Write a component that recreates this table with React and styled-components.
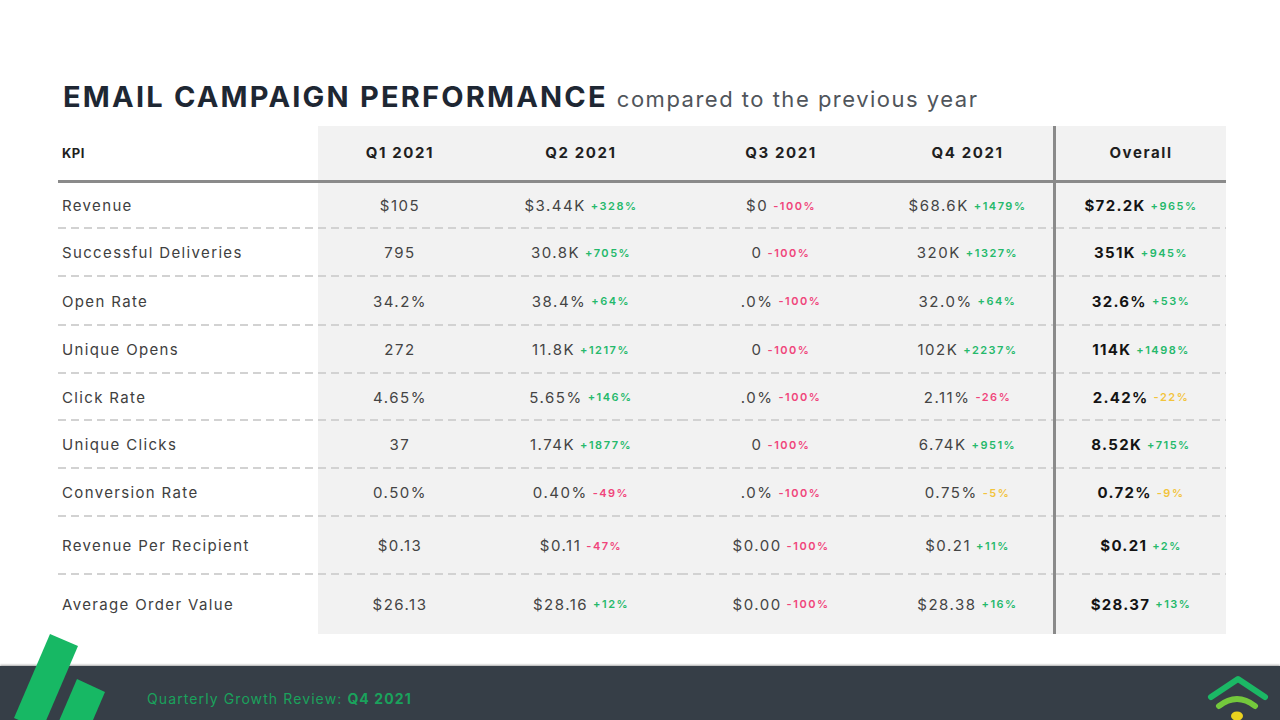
import React from 'react';
import styled, { createGlobalStyle } from 'styled-components';

const GlobalStyle = createGlobalStyle`
  html, body {
    margin: 0;
    padding: 0;
    background: #ffffff;
  }
  body {
    font-family: Inter, "Open Sans", sans-serif;
    color: #333;
  }
`;

const COLS = '260px 164px 198px 202px 171px 173px';

const Page = styled.div`
  width: 1280px;
  height: 720px;
  display: flex;
  flex-direction: column;
  overflow: hidden;
`;

const Main = styled.main`
  flex: 1;
  padding: 80px 54px 0 58px;
`;

const TitleRow = styled.div`
  display: flex;
  align-items: baseline;
  gap: 9px;
  padding-left: 5px;
  margin-bottom: 11px;
  line-height: 1.2;
`;

const Title = styled.h1`
  margin: 0;
  font-size: 29px;
  font-weight: 700;
  color: #1e2733;
  letter-spacing: 2.2px;
`;

const Subtitle = styled.span`
  font-size: 22px;
  font-weight: 400;
  color: #50555b;
  letter-spacing: 1.5px;
`;

const Table = styled.div`
  width: 1168px;
`;

const Row = styled.div`
  display: grid;
  grid-template-columns: ${COLS};
  height: ${p => p.$h}px;
`;

const HeaderRow = styled(Row)`
  border-bottom: 3px solid #8a8a8a;
`;

const Cell = styled.div`
  display: flex;
  align-items: center;
  justify-content: ${p => (p.$left ? 'flex-start' : 'center')};
  gap: 5px;
  padding-left: ${p => (p.$left ? '4px' : '0')};
  background-color: ${p => (p.$shade ? '#f2f2f2' : 'transparent')};
  border-left: ${p => (p.$divider ? '3px solid #8a8a8a' : 'none')};
  background-image: ${p =>
    p.$dash ? 'linear-gradient(to right, #d2d2d2 62%, transparent 0)' : 'none'};
  background-size: 13px 2px;
  background-repeat: repeat-x;
  background-position: left bottom;
  font-size: 15px;
  color: #444;
`;

const HeadText = styled.span`
  font-size: ${p => (p.$small ? '13px' : '15px')};
  font-weight: 700;
  color: #1f1f1f;
  letter-spacing: ${p => (p.$small ? '0.5px' : '1.6px')};
`;

const Label = styled.span`
  font-size: 15px;
  color: #404040;
  letter-spacing: 1.35px;
`;

const Value = styled.span`
  font-size: 15px;
  font-weight: ${p => (p.$bold ? 700 : 400)};
  color: ${p => (p.$bold ? '#141414' : '#444')};
  letter-spacing: ${p => (p.$bold ? '1.3px' : '1.5px')};
`;

const Change = styled.span`
  font-size: 11px;
  font-weight: 600;
  letter-spacing: 1.5px;
  color: ${p => (p.$tone === 'up' ? '#25b96b' : p.$tone === 'down' ? '#f0457b' : '#f2c43c')};
`;

const Footer = styled.footer`
  position: relative;
  height: 54px;
  flex-shrink: 0;
  box-sizing: border-box;
  background: #363e47;
  box-shadow: 0 -1px 2px rgba(0, 0, 0, 0.35);
  display: flex;
  align-items: center;
  padding: 10px 0 0 147px;
`;

const FooterText = styled.span`
  font-size: 14px;
  color: #1aa25c;
  letter-spacing: 1.1px;
  b {
    font-weight: 700;
  }
`;

const LeftLogo = styled.svg`
  position: absolute;
  left: 0;
  bottom: 0;
`;

const RightLogo = styled.svg`
  position: absolute;
  right: 10px;
  bottom: 0;
`;

const quarters = ['Q1 2021', 'Q2 2021', 'Q3 2021', 'Q4 2021'];

const tone = c => (c.startsWith('+') ? 'up' : 'down');

const rows = [
  { kpi: 'Revenue', h: 46, q: [['$105'], ['$3.44K', '+328%'], ['$0', '-100%'], ['$68.6K', '+1479%']], o: ['$72.2K', '+965%'] },
  { kpi: 'Successful Deliveries', h: 48, q: [['795'], ['30.8K', '+705%'], ['0', '-100%'], ['320K', '+1327%']], o: ['351K', '+945%'] },
  { kpi: 'Open Rate', h: 49, q: [['34.2%'], ['38.4%', '+64%'], ['.0%', '-100%'], ['32.0%', '+64%']], o: ['32.6%', '+53%'] },
  { kpi: 'Unique Opens', h: 48, q: [['272'], ['11.8K', '+1217%'], ['0', '-100%'], ['102K', '+2237%']], o: ['114K', '+1498%'] },
  { kpi: 'Click Rate', h: 47, q: [['4.65%'], ['5.65%', '+146%'], ['.0%', '-100%'], ['2.11%', '-26%']], o: ['2.42%', '-22%', 'warn'] },
  { kpi: 'Unique Clicks', h: 48, q: [['37'], ['1.74K', '+1877%'], ['0', '-100%'], ['6.74K', '+951%']], o: ['8.52K', '+715%'] },
  { kpi: 'Conversion Rate', h: 48, q: [['0.50%'], ['0.40%', '-49%'], ['.0%', '-100%'], ['0.75%', '-5%', 'warn']], o: ['0.72%', '-9%', 'warn'] },
  { kpi: 'Revenue Per Recipient', h: 58, q: [['$0.13'], ['$0.11', '-47%'], ['$0.00', '-100%'], ['$0.21', '+11%']], o: ['$0.21', '+2%'] },
  { kpi: 'Average Order Value', h: 59, q: [['$26.13'], ['$28.16', '+12%'], ['$0.00', '-100%'], ['$28.38', '+16%']], o: ['$28.37', '+13%'] },
];

const Metric = ({ data, bold }) => {
  const [value, change, warn] = data;
  return (
    <>
      <Value $bold={bold}>{value}</Value>
      {change && <Change $tone={warn ? 'warn' : tone(change)}>{change}</Change>}
    </>
  );
};

const App = () => {
  return (
    <Page>
      <GlobalStyle />
      <Main>
        <TitleRow>
          <Title>EMAIL CAMPAIGN PERFORMANCE</Title>
          <Subtitle>compared to the previous year</Subtitle>
        </TitleRow>

        <Table>
          <HeaderRow $h={54}>
            <Cell $left><HeadText $small>KPI</HeadText></Cell>
            {quarters.map(q => (
              <Cell key={q} $shade><HeadText>{q}</HeadText></Cell>
            ))}
            <Cell $shade $divider><HeadText>Overall</HeadText></Cell>
          </HeaderRow>

          {rows.map((r, i) => {
            const dash = i < rows.length - 1;
            return (
              <Row key={r.kpi} $h={r.h}>
                <Cell $left $dash={dash}><Label>{r.kpi}</Label></Cell>
                {r.q.map((d, j) => (
                  <Cell key={j} $shade $dash={dash}><Metric data={d} /></Cell>
                ))}
                <Cell $shade $divider $dash={dash}><Metric data={r.o} bold /></Cell>
              </Row>
            );
          })}
        </Table>
      </Main>

      <Footer>
        <LeftLogo width="110" height="90" viewBox="0 0 110 90">
          <polygon points="50,4 78,16 42,100 14,88" fill="#17b864" />
          <polygon points="77,49 105,62 81,118 53,105" fill="#17b864" />
        </LeftLogo>
        <FooterText>
          Quarterly Growth Review: <b>Q4 2021</b>
        </FooterText>
        <RightLogo width="66" height="48" viewBox="0 0 66 48">
          <polyline points="7,25 34,7 61,25" fill="none" stroke="#1bb865" strokeWidth="6" strokeLinecap="round" strokeLinejoin="round" />
          <path d="M15 34 Q33 20 51 34" fill="none" stroke="#74c83c" strokeWidth="6" strokeLinecap="round" />
          <ellipse cx="33" cy="44" rx="6" ry="4.5" fill="#ecd21f" />
        </RightLogo>
      </Footer>
    </Page>
  );
};

export default App;
